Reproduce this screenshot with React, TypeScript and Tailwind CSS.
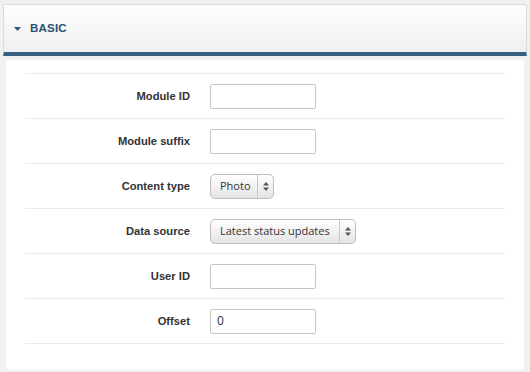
const fields = [
  { label: "Module ID", kind: "input", value: "" },
  { label: "Module suffix", kind: "input", value: "" },
  { label: "Content type", kind: "select", value: "Photo", width: "w-[64px]" },
  { label: "Data source", kind: "select", value: "Latest status updates", width: "w-[146px]" },
  { label: "User ID", kind: "input", value: "" },
  { label: "Offset", kind: "input", value: "0" },
];

function Arrows() {
  return (
    <svg width="6" height="9" viewBox="0 0 6 9" className="fill-[#555]">
      <path d="M3 0 L6 3.5 H0 Z" />
      <path d="M0 5.5 H6 L3 9 Z" />
    </svg>
  );
}

function SelectBox({ value, width }: { value: string; width?: string }) {
  return (
    <div
      className={`${width} h-[25px] flex items-stretch rounded-[5px] border border-[#bdbdbd] bg-gradient-to-b from-white to-[#e4e4e4] shadow-[inset_0_1px_0_#fff] font-['Open_Sans',sans-serif] text-[11px] text-[#333]`}
    >
      <div className="flex-1 flex items-center pl-[9px] whitespace-nowrap overflow-hidden">{value}</div>
      <div className="w-[16px] border-l border-[#c8c8c8] flex items-center justify-center">
        <Arrows />
      </div>
    </div>
  );
}

export default function App() {
  return (
    <div className="w-[530px] h-[372px] bg-[#f1f1f1] pt-[4px] overflow-hidden font-['Liberation_Sans',Arial,sans-serif]">
      <div className="ml-[3px] w-[524px] h-[52px] rounded-tr-[3px] border-t border-l border-r border-[#dcdcdc] bg-gradient-to-b from-[#fefefe] to-[#efefef] border-b-[4px] border-b-[#365f82] flex items-center pl-[10px] gap-[9px]">
        <svg width="7" height="4" viewBox="0 0 7 4" className="fill-[#2f5677]">
          <path d="M0 0 H7 L3.5 4 Z" />
        </svg>
        <span className="text-[11.5px] font-bold text-[#2b5273] tracking-[0.2px]">BASIC</span>
      </div>

      <div className="ml-[6px] mt-[4px] w-[518px] h-[310px] bg-white rounded-[4px] px-[19px] pt-[13px]">
        {fields.map((f) => (
          <div key={f.label} className="h-[45px] border-t border-[#ebebeb] flex items-center">
            <div className="w-[165px] text-right text-[11.2px] font-bold text-[#333]">{f.label}</div>
            <div className="ml-[20px]">
              {f.kind === "input" ? (
                <div className="w-[106px] h-[25px] border border-[#c6c6c6] rounded-[2px] bg-white flex items-center px-[6px] font-['Open_Sans',sans-serif] text-[12px] text-[#333]">
                  {f.value}
                </div>
              ) : (
                <SelectBox value={f.value} width={f.width} />
              )}
            </div>
          </div>
        ))}
        <div className="border-t border-[#ebebeb]" />
      </div>
    </div>
  );
}
